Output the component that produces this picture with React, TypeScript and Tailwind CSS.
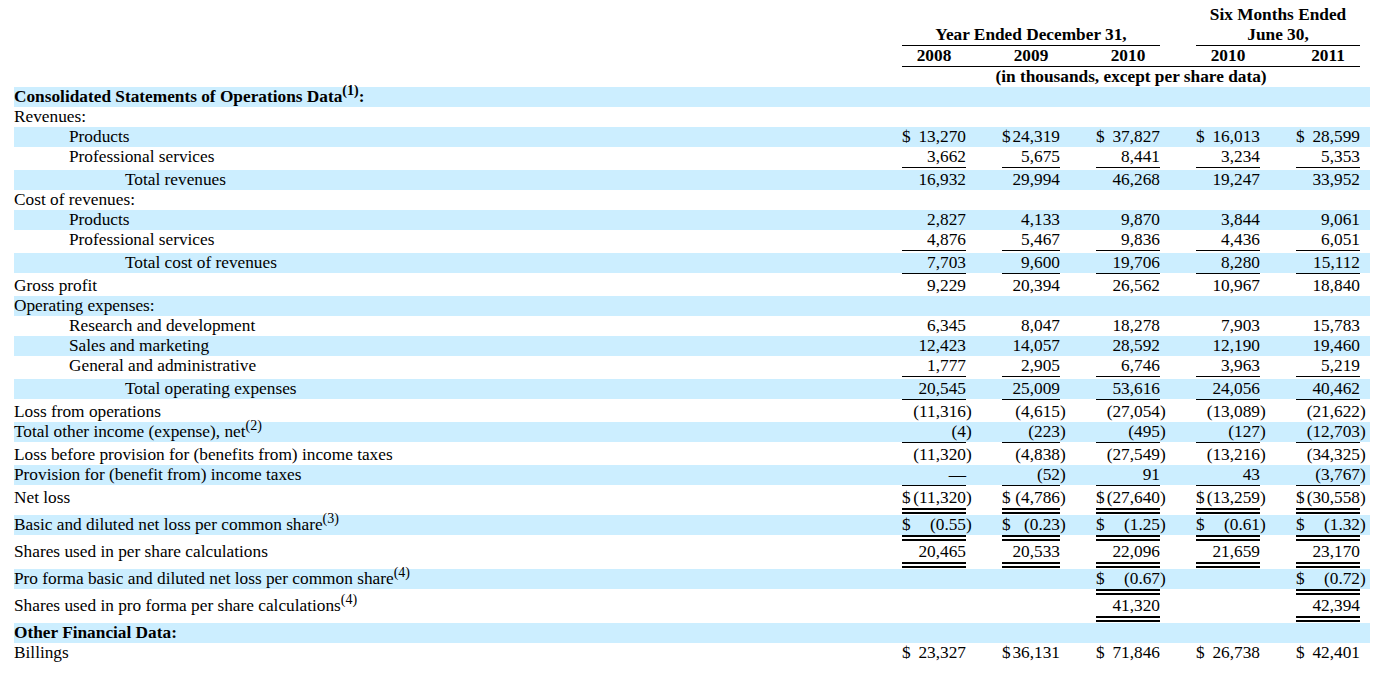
import React from 'react';

type Rule = 'single' | 'double';

interface Row {
    label: string;
    sup?: string;
    tail?: string;
    bold?: boolean;
    band?: boolean;
    indent?: 0 | 1 | 2;
    v?: string[];
    rule?: Rule;
    ruleCols?: number[];
}

const COLS = 'grid grid-cols-[888px_64px_36px_58px_36px_64px_36px_64px_36px_64px_10px]';

const rows: Row[] = [
    { label: 'Consolidated Statements of Operations Data', sup: '(1)', tail: ':', bold: true, band: true },
    { label: 'Revenues:' },
    { label: 'Products', indent: 1, band: true, v: ['$ 13,270', '$24,319', '$ 37,827', '$ 16,013', '$ 28,599'] },
    { label: 'Professional services', indent: 1, v: ['3,662', '5,675', '8,441', '3,234', '5,353'], rule: 'single' },
    { label: 'Total revenues', indent: 2, band: true, v: ['16,932', '29,994', '46,268', '19,247', '33,952'] },
    { label: 'Cost of revenues:' },
    { label: 'Products', indent: 1, band: true, v: ['2,827', '4,133', '9,870', '3,844', '9,061'] },
    { label: 'Professional services', indent: 1, v: ['4,876', '5,467', '9,836', '4,436', '6,051'], rule: 'single' },
    { label: 'Total cost of revenues', indent: 2, band: true, v: ['7,703', '9,600', '19,706', '8,280', '15,112'], rule: 'single' },
    { label: 'Gross profit', v: ['9,229', '20,394', '26,562', '10,967', '18,840'] },
    { label: 'Operating expenses:', band: true },
    { label: 'Research and development', indent: 1, v: ['6,345', '8,047', '18,278', '7,903', '15,783'] },
    { label: 'Sales and marketing', indent: 1, band: true, v: ['12,423', '14,057', '28,592', '12,190', '19,460'] },
    { label: 'General and administrative', indent: 1, v: ['1,777', '2,905', '6,746', '3,963', '5,219'], rule: 'single' },
    { label: 'Total operating expenses', indent: 2, band: true, v: ['20,545', '25,009', '53,616', '24,056', '40,462'], rule: 'single' },
    { label: 'Loss from operations', v: ['(11,316)', '(4,615)', '(27,054)', '(13,089)', '(21,622)'] },
    { label: 'Total other income (expense), net', sup: '(2)', band: true, v: ['(4)', '(223)', '(495)', '(127)', '(12,703)'], rule: 'single' },
    { label: 'Loss before provision for (benefits from) income taxes', v: ['(11,320)', '(4,838)', '(27,549)', '(13,216)', '(34,325)'] },
    { label: 'Provision for (benefit from) income taxes', band: true, v: ['\u2014', '(52)', '91', '43', '(3,767)'], rule: 'single' },
    { label: 'Net loss', v: ['$(11,320)', '$ (4,786)', '$(27,640)', '$(13,259)', '$(30,558)'], rule: 'double' },
    { label: 'Basic and diluted net loss per common share', sup: '(3)', band: true, v: ['$ (0.55)', '$ (0.23)', '$ (1.25)', '$ (0.61)', '$ (1.32)'], rule: 'double' },
    { label: 'Shares used in per share calculations', v: ['20,465', '20,533', '22,096', '21,659', '23,170'], rule: 'double' },
    { label: 'Pro forma basic and diluted net loss per common share', sup: '(4)', band: true, v: ['', '', '$ (0.67)', '', '$ (0.72)'], rule: 'double', ruleCols: [2, 4] },
    { label: 'Shares used in pro forma per share calculations', sup: '(4)', v: ['', '', '41,320', '', '42,394'], rule: 'double', ruleCols: [2, 4] },
    { label: 'Other Financial Data:', bold: true, band: true },
    { label: 'Billings', v: ['$ 23,327', '$36,131', '$ 71,846', '$ 26,738', '$ 42,401'] },
];

const parse = (s: string) => {
    let rest = s;
    const dollar = rest.startsWith('$');
    if (dollar) rest = rest.slice(1).trim();
    const paren = rest.endsWith(')');
    if (paren) rest = rest.slice(0, -1);
    return { dollar, num: rest, paren };
};

const Label: React.FC<{ row: Row }> = ({ row }) => {
    const pad = row.indent === 2 ? 'pl-[111px]' : row.indent === 1 ? 'pl-[55px]' : '';
    return (
        <div className={`${pad} whitespace-nowrap ${row.bold ? 'font-bold' : ''}`}>
            {row.label}
            {row.sup && <sup className="text-[14px]">{row.sup}</sup>}
            {row.tail}
        </div>
    );
};

const BodyRow: React.FC<{ row: Row }> = ({ row }) => {
    const values = row.v || ['', '', '', '', ''];
    const ruleCols = row.ruleCols || [0, 1, 2, 3, 4];
    return (
        <div>
            <div className={`${COLS} h-[20px] leading-[20px] ${row.band ? 'bg-[#cceeff]' : ''}`}>
                <Label row={row} />
                {values.map((val, i) => {
                    const { dollar, num, paren } = parse(val);
                    return (
                        <React.Fragment key={i}>
                            <div className="flex justify-between whitespace-nowrap">
                                <span>{dollar ? '$' : ''}</span>
                                <span>{num}</span>
                            </div>
                            <div>{paren ? ')' : ''}</div>
                        </React.Fragment>
                    );
                })}
            </div>
            {row.rule && (
                <div className={`${COLS} ${row.rule === 'single' ? 'h-[3px]' : 'h-[7px]'}`}>
                    <div />
                    {values.map((_, i) => (
                        <React.Fragment key={i}>
                            <div>
                                {ruleCols.includes(i) && (
                                    row.rule === 'single'
                                        ? <div className="h-px bg-black" />
                                        : <div className="h-[6px] border-y-2 border-black" />
                                )}
                            </div>
                            <div />
                        </React.Fragment>
                    ))}
                </div>
            )}
        </div>
    );
};

const Header: React.FC = () => (
    <div className="pt-[5px] font-bold leading-[20px]">
        <div className={`${COLS} h-[20px]`}>
            <div className="col-[8/11] text-center">Six Months Ended</div>
        </div>
        <div className={`${COLS} h-[20px]`}>
            <div className="col-[2/7] text-center">Year Ended December 31,</div>
            <div className="col-[8/11] text-center">June 30,</div>
        </div>
        <div className={`${COLS} h-px`}>
            <div className="col-[2/7] bg-black" />
            <div className="col-[8/11] bg-black" />
        </div>
        <div className={`${COLS} h-[20px]`}>
            <div />
            {['2008', '2009', '2010', '2010', '2011'].map((y, i) => (
                <React.Fragment key={i}>
                    <div className="text-center">{y}</div>
                    <div />
                </React.Fragment>
            ))}
        </div>
        <div className={`${COLS} h-px`}>
            <div className="col-[2/11] bg-black" />
        </div>
        <div className={`${COLS} h-[20px]`}>
            <div className="col-[2/11] text-center whitespace-nowrap">(in thousands, except per share data)</div>
        </div>
    </div>
);

export default function App() {
    return (
        <div className="w-[1381px] h-[677px] bg-white text-black pl-[14px] text-[17.3px] font-['Liberation_Serif',serif]">
            <div className="w-[1356px]">
                <Header />
                {rows.map((row, i) => (
                    <BodyRow key={i} row={row} />
                ))}
            </div>
        </div>
    );
}
